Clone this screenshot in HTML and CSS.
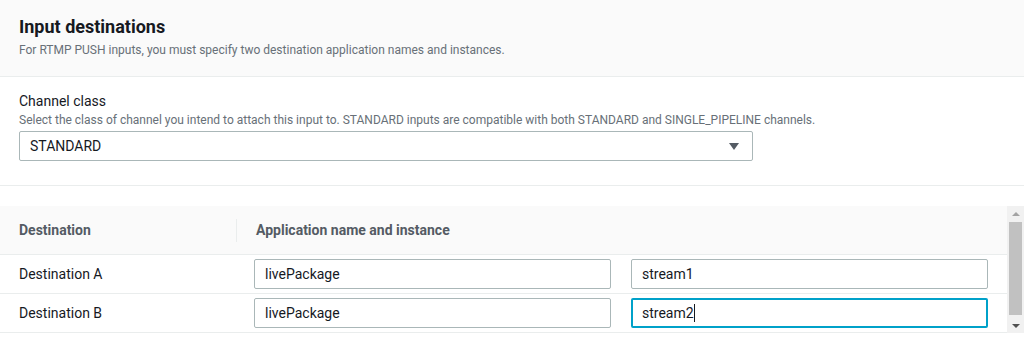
FILE: index.html
```html
<!DOCTYPE html>
<html lang="en">
<head>
    <meta charset="UTF-8">
    <meta name="viewport" content="width=device-width, initial-scale=1.0">
    <title>Input destinations</title>
    <link rel="stylesheet" href="styles.css">
</head>
<body>
    <div class="panel">
        <header class="panel-header">
            <h2>Input destinations</h2>
            <p>For RTMP PUSH inputs, you must specify two destination application names and instances.</p>
        </header>

        <section class="panel-body">
            <label class="field-label">Channel class</label>
            <p class="field-desc">Select the class of channel you intend to attach this input to. STANDARD inputs are compatible with both STANDARD and SINGLE_PIPELINE channels.</p>
            <div class="select">
                <span>STANDARD</span>
                <span class="select-arrow"></span>
            </div>
        </section>

        <div class="dest-wrap">
            <div class="dest-table">
                <div class="dest-row dest-head">
                    <div class="col-name">Destination</div>
                    <div class="col-app">Application name and instance</div>
                </div>
                <div class="dest-row">
                    <div class="col-name">Destination A</div>
                    <div class="col-app">
                        <div class="text-input">livePackage</div>
                        <div class="text-input">stream1</div>
                    </div>
                </div>
                <div class="dest-row">
                    <div class="col-name">Destination B</div>
                    <div class="col-app">
                        <div class="text-input">livePackage</div>
                        <div class="text-input focused">stream2<span class="caret"></span></div>
                    </div>
                </div>
            </div>
            <div class="scrollbar">
                <span class="sb-up"></span>
                <span class="sb-thumb"></span>
                <span class="sb-down"></span>
            </div>
        </div>
    </div>
</body>
</html>
```

FILE: styles.css
```css
html, body, div, span, h2, p, label, header, section {
    margin: 0;
    padding: 0;
    border: 0;
    font: inherit;
}

body {
    font-family: 'Roboto', 'Liberation Sans', sans-serif;
    font-size: 14px;
    line-height: 20px;
    color: #16191f;
    background-color: #fff;
}

.panel-header {
    background-color: #fafafa;
    border-bottom: 1px solid #eaeded;
    padding: 16px 19px 18px;
    height: 42px;
}

.panel-header h2 {
    font-size: 18px;
    line-height: 22px;
    font-weight: bold;
}

.panel-header p {
    margin-top: 4px;
    font-size: 12px;
    line-height: 16px;
    color: #687078;
}

.panel-body {
    padding: 14px 19px 24px;
    border-bottom: 1px solid #eaeded;
}

.field-label {
    display: block;
}

.field-desc {
    margin-top: 1px;
    font-size: 12px;
    line-height: 16px;
    color: #687078;
}

.select {
    margin-top: 3px;
    width: 734px;
    height: 30px;
    box-sizing: border-box;
    border: 1px solid #aab7b8;
    border-radius: 2px;
    display: flex;
    align-items: center;
    justify-content: space-between;
    padding: 0 13px 0 10px;
}

.select-arrow {
    width: 0;
    height: 0;
    border-left: 5.5px solid transparent;
    border-right: 5.5px solid transparent;
    border-top: 7px solid #545b64;
}

.dest-wrap {
    margin-top: 20px;
    display: flex;
}

.dest-table {
    flex: 1;
}

.dest-row {
    display: flex;
    align-items: center;
    height: 38px;
    border-bottom: 1px solid #eaeded;
}

.dest-head {
    height: 48px;
    background-color: #fafafa;
    font-weight: bold;
    color: #545b64;
}

.col-name {
    width: 217px;
    padding-left: 19px;
}

.dest-head .col-name {
    border-right: 1px solid #eaeded;
    height: 23px;
    line-height: 23px;
}

.dest-head .col-app {
    padding-left: 19px;
}

.col-app {
    flex: 1;
    display: flex;
    gap: 20px;
    padding: 0 19px 0 18px;
}

.text-input {
    flex: 1;
    height: 30px;
    box-sizing: border-box;
    border: 1px solid #aab7b8;
    border-radius: 2px;
    padding: 0 10px;
    display: flex;
    align-items: center;
}

.text-input.focused {
    border: 2px solid #00a1c9;
    padding: 0 9px;
}

.caret {
    display: inline-block;
    width: 1px;
    height: 18px;
    background-color: #16191f;
}

.scrollbar {
    width: 17px;
    background-color: #f1f1f1;
    display: flex;
    flex-direction: column;
    align-items: center;
    padding: 6px 0 5px;
}

.sb-up, .sb-down {
    width: 0;
    height: 0;
    border-left: 4px solid transparent;
    border-right: 4px solid transparent;
}

.sb-up {
    border-bottom: 4px solid #a3a3a3;
}

.sb-down {
    border-top: 4px solid #505050;
}

.sb-thumb {
    width: 13px;
    flex: 1;
    margin: 6px 0 9px;
    background-color: #c1c1c1;
}
```
